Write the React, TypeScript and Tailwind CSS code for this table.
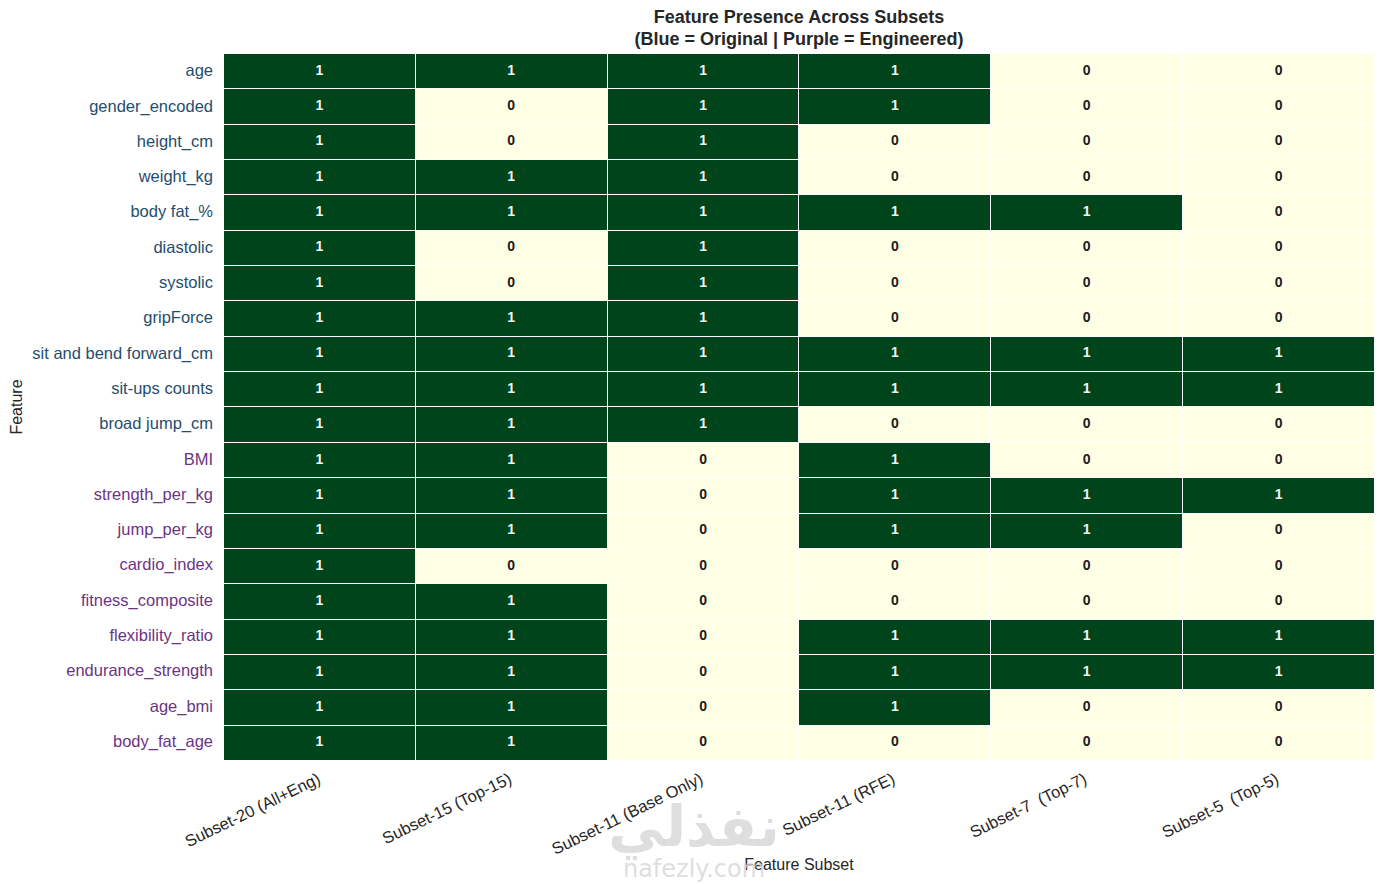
import React from "react";

const subsets = [
    "Subset-20 (All+Eng)",
    "Subset-15 (Top-15)",
    "Subset-11 (Base Only)",
    "Subset-11 (RFE)",
    "Subset-7  (Top-7)",
    "Subset-5  (Top-5)",
];

// name, engineered?, presence per subset
const features: [string, boolean, number[]][] = [
    ["age", false, [1, 1, 1, 1, 0, 0]],
    ["gender_encoded", false, [1, 0, 1, 1, 0, 0]],
    ["height_cm", false, [1, 0, 1, 0, 0, 0]],
    ["weight_kg", false, [1, 1, 1, 0, 0, 0]],
    ["body fat_%", false, [1, 1, 1, 1, 1, 0]],
    ["diastolic", false, [1, 0, 1, 0, 0, 0]],
    ["systolic", false, [1, 0, 1, 0, 0, 0]],
    ["gripForce", false, [1, 1, 1, 0, 0, 0]],
    ["sit and bend forward_cm", false, [1, 1, 1, 1, 1, 1]],
    ["sit-ups counts", false, [1, 1, 1, 1, 1, 1]],
    ["broad jump_cm", false, [1, 1, 1, 0, 0, 0]],
    ["BMI", true, [1, 1, 0, 1, 0, 0]],
    ["strength_per_kg", true, [1, 1, 0, 1, 1, 1]],
    ["jump_per_kg", true, [1, 1, 0, 1, 1, 0]],
    ["cardio_index", true, [1, 0, 0, 0, 0, 0]],
    ["fitness_composite", true, [1, 1, 0, 0, 0, 0]],
    ["flexibility_ratio", true, [1, 1, 0, 1, 1, 1]],
    ["endurance_strength", true, [1, 1, 0, 1, 1, 1]],
    ["age_bmi", true, [1, 1, 0, 1, 0, 0]],
    ["body_fat_age", true, [1, 1, 0, 0, 0, 0]],
];

const Cell = ({ v }: { v: number }) => (
    <div
        className={
            v
                ? "bg-[#00441b] text-[#f4f4f4] flex items-center justify-center pb-[2px] text-[14px] font-bold"
                : "bg-[#ffffe5] text-[#1a1a1a] flex items-center justify-center pb-[2px] text-[14px] font-bold"
        }
    >
        {v}
    </div>
);

export default function App() {
    return (
        <div className="relative w-[1384px] h-[884px] bg-white overflow-hidden text-[#262626] font-['Liberation_Sans',Arial,sans-serif]">
            {/* title */}
            <div className="ml-[224px] w-[1150px] h-[54px] pt-[6px] text-center text-[18px] font-bold leading-[22px] text-[#262626]">
                <div>Feature Presence Across Subsets</div>
                <div>(Blue = Original | Purple = Engineered)</div>
            </div>

            <div className="flex">
                <div className="w-[34px] h-[706px] flex items-center justify-center">
                    <span className="-rotate-90 whitespace-nowrap text-[16px]">Feature</span>
                </div>
                <div className="w-[179px] h-[706px] flex flex-col mr-[11px]">
                    {features.map(([name, eng]) => (
                        <div
                            key={name}
                            className={
                                eng
                                    ? "flex-1 flex items-center justify-end pb-[2px] whitespace-nowrap text-[16.5px] text-[#6c3483]"
                                    : "flex-1 flex items-center justify-end pb-[2px] whitespace-nowrap text-[16.5px] text-[#1f4e6e]"
                            }
                        >
                            {name}
                        </div>
                    ))}
                </div>
                <div className="w-[1150px] h-[706px] grid grid-cols-6 grid-rows-[repeat(20,minmax(0,1fr))] gap-px bg-white">
                    {features.map(([name, , vals]) =>
                        vals.map((v, i) => <Cell key={name + i} v={v} />)
                    )}
                </div>
            </div>

            {/* x tick labels */}
            <div className="ml-[224px] w-[1150px] h-[95px] grid grid-cols-6">
                {subsets.map((s) => (
                    <div key={s} className="w-1/2 flex justify-end pt-[9px] pr-[5px]">
                        <span className="origin-top-right -rotate-[26deg] whitespace-pre text-[16.5px] leading-[18px] h-[18px]">
                            {s}
                        </span>
                    </div>
                ))}
            </div>
            <div className="ml-[224px] w-[1150px] text-center text-[16px] leading-[20px]">Feature Subset</div>

            {/* watermark */}
            <div className="absolute left-[604px] top-[796px] w-[180px] flex flex-col items-center pointer-events-none text-[#d6d6d6]/80">
                <span className="text-[56px] leading-[62px] font-bold font-['DejaVu_Sans',sans-serif]">نفذلي</span>
                <span className="text-[24px] leading-[26px] font-['DejaVu_Sans',sans-serif] -mt-[2px]">nafezly.com</span>
            </div>
        </div>
    );
}
